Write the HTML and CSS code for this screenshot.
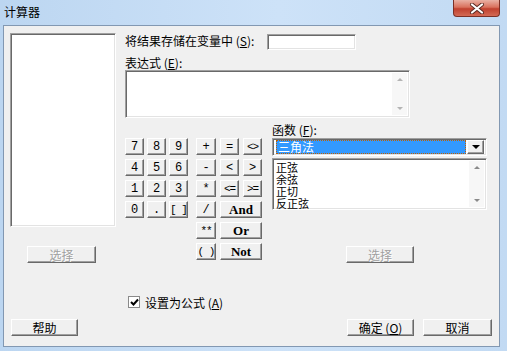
FILE: index.html
```html
<!DOCTYPE html>
<html lang="zh-CN">
<head>
  <meta charset="UTF-8" />
  <title>计算器</title>
  <link rel="stylesheet" href="styles.css">
</head>
<body>
  <div class="titlebar">
    <span class="title">计算器</span>
    <div class="close">
      <svg width="16" height="11" viewBox="0 0 16 11">
        <path d="M3 1.5 L13 9.5 M13 1.5 L3 9.5" stroke="#5a2a22" stroke-width="4" stroke-linecap="round"/>
        <path d="M3 1.5 L13 9.5 M13 1.5 L3 9.5" stroke="#fff" stroke-width="2.2" stroke-linecap="round"/>
      </svg>
    </div>
  </div>

  <div class="client">
    <div class="main">
      <div class="left">
        <div class="field listbox"></div>
        <div class="btn disabled pick-left">选择</div>
      </div>

      <div class="right">
        <div class="store-row">
          <span class="store-label">将结果存储在变量中 (<u>S</u>):</span>
          <div class="field store"></div>
        </div>
        <div class="expr-label">表达式 (<u>E</u>):</div>
        <div class="field expr">
          <div class="scroll">
            <span class="arrow up light"></span>
            <span class="arrow down light"></span>
          </div>
        </div>

        <div class="lower">
          <div class="keypad">
            <div class="digits">
              <div class="btn key">7</div>
              <div class="btn key">8</div>
              <div class="btn key">9</div>
              <div class="btn key">4</div>
              <div class="btn key">5</div>
              <div class="btn key">6</div>
              <div class="btn key">1</div>
              <div class="btn key">2</div>
              <div class="btn key">3</div>
              <div class="btn key">0</div>
              <div class="btn key">.</div>
              <div class="btn key tight">[ ]</div>
            </div>
            <div class="ops">
              <div class="btn key">+</div>
              <div class="btn key">=</div>
              <div class="btn key tight">&lt;&gt;</div>
              <div class="btn key">-</div>
              <div class="btn key">&lt;</div>
              <div class="btn key">&gt;</div>
              <div class="btn key">*</div>
              <div class="btn key tight">&lt;=</div>
              <div class="btn key tight">&gt;=</div>
              <div class="btn key">/</div>
              <div class="btn key wide">And</div>
              <div class="btn key tight">**</div>
              <div class="btn key wide">Or</div>
              <div class="btn key tight">( )</div>
              <div class="btn key wide">Not</div>
            </div>
          </div>

          <div class="func">
            <div class="func-label">函数 (<u>F</u>):</div>
            <div class="field combo">
              <span class="selected">三角法</span>
              <span class="drop"><span class="arrow down dark"></span></span>
            </div>
            <div class="field funclist">
              <ul class="items">
                <li>正弦</li>
                <li>余弦</li>
                <li>正切</li>
                <li>反正弦</li>
              </ul>
              <div class="scroll">
                <span class="arrow up"></span>
                <span class="arrow down"></span>
              </div>
            </div>
            <div class="btn disabled pick-right">选择</div>
          </div>
        </div>
      </div>
    </div>

    <div class="check-row">
      <span class="checkbox">
        <svg width="9" height="9" viewBox="0 0 9 9">
          <path d="M1 4 L3.5 6.5 L8 1.5" fill="none" stroke="#000" stroke-width="2"/>
        </svg>
      </span>
      <span>设置为公式 (<u>A</u>)</span>
    </div>

    <div class="buttons">
      <div class="btn help">帮助</div>
      <div class="btn-group">
        <div class="btn ok">确定 (<u>O</u>)</div>
        <div class="btn cancel">取消</div>
      </div>
    </div>
  </div>
</body>
</html>
```

FILE: styles.css
```css
body {
  margin: 0;
  width: 507px;
  height: 351px;
  overflow: hidden;
  font-family: "Noto Sans CJK SC", sans-serif;
  font-size: 12px;
  color: #000;
  background: linear-gradient(to right, #bcd6f1, #cde2f8 55%, #c2daf3);
}

u {
  text-decoration: underline;
}

/* window chrome */
.titlebar {
  height: 25px;
  display: flex;
  justify-content: space-between;
  align-items: flex-start;
}

.title {
  margin: 3px 0 0 4px;
  line-height: 18px;
}

.close {
  width: 45px;
  height: 16px;
  margin-right: 7px;
  border: 1px solid #7b3026;
  border-top: none;
  border-radius: 0 0 4px 4px;
  background: linear-gradient(#e9b1a4, #d9715d 45%, #c0412f 55%, #d36a55);
  display: flex;
  align-items: center;
  justify-content: center;
}

.client {
  box-sizing: border-box;
  width: 497px;
  height: 322px;
  margin-left: 3px;
  border: 1px solid #8298b2;
  background: #f0f0f0;
  padding: 7px 7px 0 6px;
  display: flex;
  flex-direction: column;
}

/* classic 3d controls */
.btn {
  box-sizing: border-box;
  height: 17px;
  background: #f0f0f0;
  border: 1px solid;
  border-color: #fff #696969 #696969 #fff;
  box-shadow: inset -1px -1px #a0a0a0;
  display: flex;
  align-items: center;
  justify-content: center;
  line-height: 12px;
  white-space: nowrap;
  overflow: hidden;
}

.btn.disabled {
  color: #a0a0a0;
  text-shadow: 1px 1px #fff;
}

.field {
  box-sizing: border-box;
  background: #fff;
  border: 1px solid;
  border-color: #a0a0a0 #fff #fff #a0a0a0;
  box-shadow: inset 1px 1px #696969, inset -1px -1px #e3e3e3;
}

.arrow {
  width: 0;
  height: 0;
  border-left: 3px solid transparent;
  border-right: 3px solid transparent;
}

.arrow.up {
  border-bottom: 3px solid #8a8a8a;
}

.arrow.down {
  border-top: 3px solid #8a8a8a;
}

.arrow.light.up {
  border-bottom-color: #b4b4b4;
}

.arrow.light.down {
  border-top-color: #b4b4b4;
}

.arrow.dark.down {
  border-left-width: 4px;
  border-right-width: 4px;
  border-top: 4px solid #000;
}

.scroll {
  width: 15px;
  margin: 2px 2px 2px auto;
  background: #f7f7f7;
  display: flex;
  flex-direction: column;
  justify-content: space-between;
  align-items: center;
  padding: 5px 0;
  box-sizing: border-box;
}

/* main area */
.main {
  display: flex;
}

.left {
  width: 106px;
  display: flex;
  flex-direction: column;
}

.listbox {
  height: 194px;
}

.pick-left {
  width: 69px;
  margin: 19px 0 0 17px;
}

.right {
  margin-left: 9px;
  display: flex;
  flex-direction: column;
}

.store-row {
  display: flex;
  height: 18px;
}

.store-label {
  width: 142px;
  line-height: 14px;
  margin-top: 1px;
}

.store {
  width: 89px;
  height: 16px;
  margin-top: 1px;
}

.expr-label {
  height: 19px;
  box-sizing: border-box;
  padding-top: 4px;
  line-height: 15px;
}

.expr {
  width: 285px;
  height: 48px;
  display: flex;
}

.lower {
  display: flex;
  margin-top: 2px;
}

/* keypad */
.keypad {
  display: flex;
  margin-top: 18px;
  width: 137px;
}

.digits,
.ops {
  display: grid;
  grid-auto-rows: 17px;
  row-gap: 4px;
  align-content: start;
}

.digits {
  grid-template-columns: 19px 19px 19px;
  column-gap: 3px;
}

.ops {
  margin-left: 8px;
  grid-template-columns: 20px 19px 19px;
  column-gap: 4px;
}

.key {
  font-family: "Liberation Mono", monospace;
  font-size: 12px;
}

.key.tight {
  letter-spacing: -1px;
  font-size: 11px;
}

.key.wide {
  grid-column: span 2;
  font-family: "Liberation Serif", serif;
  font-weight: bold;
  font-size: 13px;
}

/* function picker */
.func {
  width: 215px;
  margin-left: 10px;
  display: flex;
  flex-direction: column;
}

.func-label {
  margin-top: 4px;
  height: 14px;
  line-height: 12px;
}

.combo {
  height: 18px;
  display: flex;
  align-items: center;
  padding: 2px 2px 2px 3px;
}

.selected {
  flex: 1;
  height: 14px;
  box-sizing: border-box;
  background: #3399ff;
  color: #fff;
  outline: 1px dotted #c06000;
  outline-offset: -1px;
  padding-left: 2px;
  line-height: 14px;
}

.drop {
  box-sizing: border-box;
  width: 17px;
  height: 14px;
  margin-left: 1px;
  background: #f0f0f0;
  border: 1px solid;
  border-color: #fff #696969 #696969 #fff;
  box-shadow: inset -1px -1px #a0a0a0;
  display: flex;
  align-items: center;
  justify-content: center;
}

.funclist {
  height: 52px;
  margin-top: 2px;
  display: flex;
}

.items {
  list-style: none;
  margin: 0;
  padding: 2px 0 0 3px;
  font-size: 11px;
  line-height: 12px;
}

.pick-right {
  width: 68px;
  margin: 36px 0 0 74px;
}

/* bottom */
.check-row {
  display: flex;
  align-items: center;
  height: 14px;
  margin: 32px 0 0 118px;
  gap: 5px;
}

.checkbox {
  box-sizing: border-box;
  width: 12px;
  height: 12px;
  background: #fff;
  border: 1px solid #8a8a8a;
  display: flex;
  align-items: center;
  justify-content: center;
}

.buttons {
  display: flex;
  justify-content: space-between;
  margin-top: 10px;
}

.help {
  width: 67px;
  margin-left: 1px;
}

.btn-group {
  display: flex;
  gap: 9px;
}

.ok {
  width: 67px;
}

.cancel {
  width: 69px;
}
```
